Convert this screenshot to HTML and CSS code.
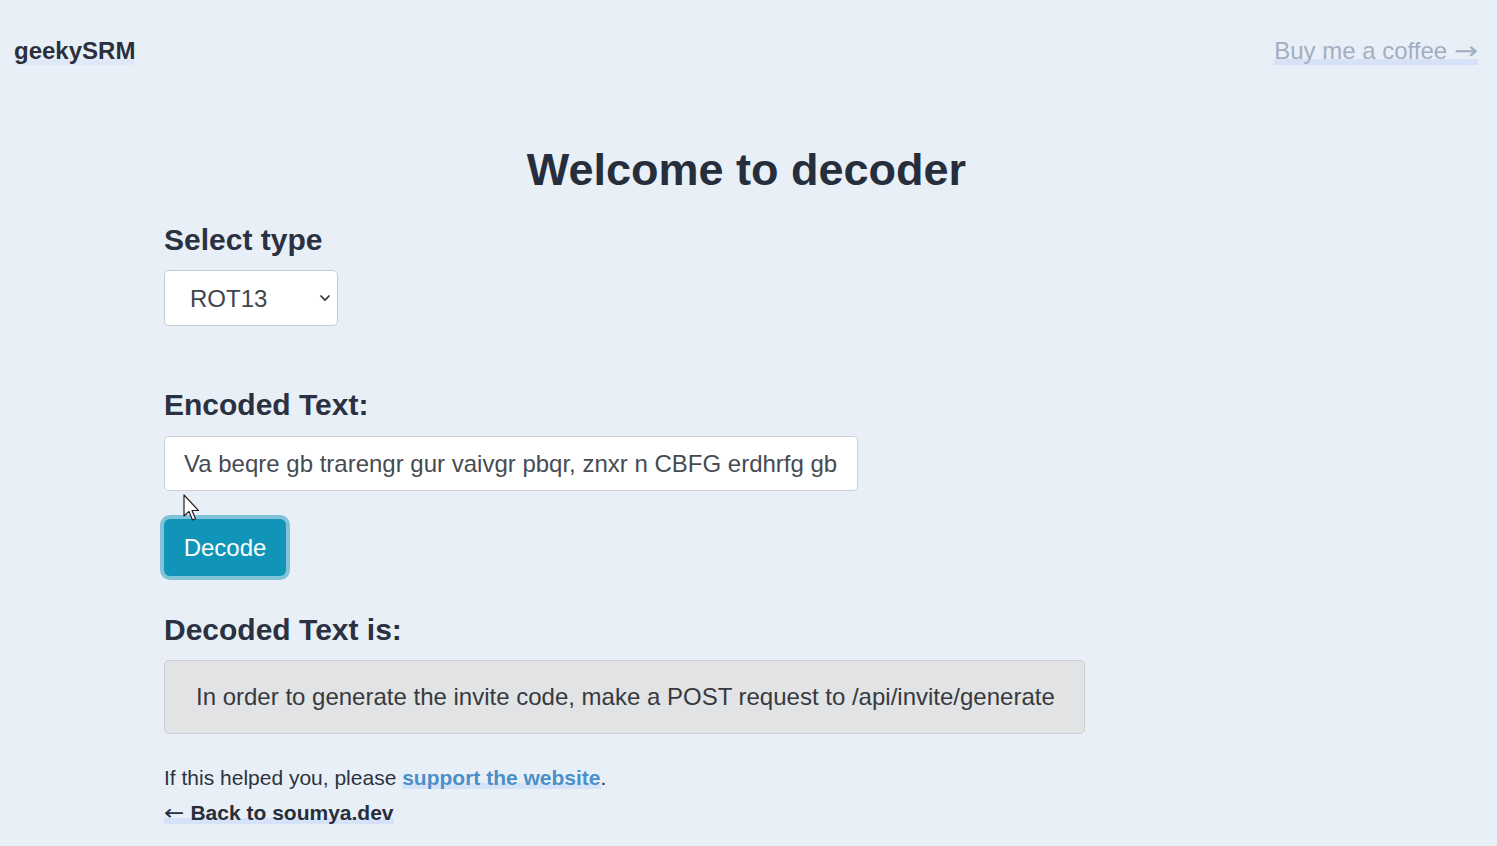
FILE: index.html
```html
<!DOCTYPE html>
<html lang="en">
<head>
<meta charset="utf-8">
<title>Decoder</title>
<link rel="stylesheet" href="styles.css">
</head>
<body>
<header class="topbar">
  <a class="brand hl" href="#">geekySRM</a>
  <a class="coffee hl" href="#">Buy me a coffee <span class="arrow arrow-r">→</span></a>
</header>
<main class="page">
  <h1 class="title">Welcome to decoder</h1>
  <label class="label label-first">Select type</label>
  <div class="select-wrap">
    <select class="select"><option>ROT13</option></select>
    <svg class="chev" width="12" height="8" viewBox="0 0 12 8"><path d="M1.5 1.5 L6 6 L10.5 1.5" fill="none" stroke="#333" stroke-width="1.7"/></svg>
  </div>
  <label class="label label-enc">Encoded Text:</label>
  <input class="input" type="text" value="Va beqre gb trarengr gur vaivgr pbqr, znxr n CBFG erdhrfg gb /ncv/vaivgr/trarengr">
  <div class="btn-row">
    <button class="btn">Decode</button>
    <svg class="cursor" width="20" height="30" viewBox="0 0 20 30"><path d="M1 1 L1 22 L6 17.5 L9.5 26 L12.5 24.7 L9 16.5 L15.5 16.5 Z" fill="#fff" stroke="#222" stroke-width="1.2" stroke-linejoin="round"/></svg>
  </div>
  <label class="label label-dec">Decoded Text is:</label>
  <div class="result">In order to generate the invite code, make a POST request to /api/invite/generate</div>
  <p class="note">If this helped you, please <a class="support hl" href="#">support the website</a>.</p>
  <p class="back"><a class="hl back-link" href="#"><span class="arrow arrow-l">←</span> Back to soumya.dev</a></p>
</main>
</body>
</html>
```

FILE: styles.css
```css
* { box-sizing: border-box; }
html, body { margin: 0; padding: 0; }
body {
  background: #e8eff7;
  font-family: "Liberation Sans", Arial, sans-serif;
  color: #2d3340;
  width: 1497px;
  height: 846px;
  overflow: hidden;
}
a { text-decoration: none; color: inherit; }
.hl {
  background-image: linear-gradient(rgba(200, 217, 247, 0.6), rgba(200, 217, 247, 0.6));
  background-repeat: no-repeat;
  background-position: 0 100%;
  background-size: 100% 6px;
}
.arrow {
  display: inline-block;
  font-family: "DejaVu Sans", sans-serif;
  font-weight: normal;
}
.arrow-r {
  transform: scaleX(1.2);
  transform-origin: right center;
  margin-left: 4px;
}
.arrow-l {
  transform: scaleX(1.15);
  transform-origin: left center;
  margin-right: 3px;
}
.topbar {
  display: flex;
  justify-content: space-between;
  align-items: center;
  padding: 37px 19px 0 14px;
  font-size: 24px;
  line-height: 28px;
}
.brand { font-weight: bold; color: #2a303c; background-image: linear-gradient(rgba(210, 224, 248, 0.4), rgba(210, 224, 248, 0.4)); }
.coffee { color: #a3aec0; }
.page {
  padding: 0 164px;
}
.title {
  margin: 79px 4px 0 0;
  text-align: center;
  font-size: 45px;
  line-height: 52px;
  font-weight: bold;
  color: #262e3b;
}
.label {
  display: block;
  font-size: 30px;
  line-height: 34px;
  font-weight: bold;
  color: #2a3140;
}
.label-first { margin-top: 27px; }
.label-enc { margin-top: 62px; }
.label-dec { margin-top: 37px; }
.select-wrap {
  position: relative;
  width: 174px;
  height: 56px;
  margin-top: 13px;
}
.select {
  appearance: none;
  -webkit-appearance: none;
  width: 174px;
  height: 56px;
  border: 1.5px solid #c8ccd2;
  border-radius: 5px;
  background: #fff;
  font-family: "Liberation Sans", Arial, sans-serif;
  font-size: 24px;
  color: #40454c;
  padding: 0 0 0 25px;
}
.chev {
  position: absolute;
  right: 7px;
  top: 24px;
}
.input {
  display: block;
  margin-top: 14px;
  width: 694px;
  height: 55px;
  border: 1.5px solid #cdd1d6;
  border-radius: 5px;
  background: #fff;
  font-family: "Liberation Sans", Arial, sans-serif;
  font-size: 24px;
  color: #464b52;
  padding: 0 19px;
}
.btn-row {
  position: relative;
  margin-top: 28px;
  height: 57px;
}
.btn {
  width: 122px;
  height: 57px;
  border: 0;
  border-radius: 6px;
  background: #1095b8;
  color: #fff;
  font-family: "Liberation Sans", Arial, sans-serif;
  font-size: 24px;
  box-shadow: 0 0 0 4px #80c3d8;
  padding: 0;
}
.cursor {
  position: absolute;
  left: 19px;
  top: -25px;
}
.result {
  display: inline-block;
  margin-top: 13px;
  height: 74px;
  padding: 0 29px 0 31px;
  line-height: 72px;
  background: #e2e3e4;
  border: 1.5px solid #cbcfd4;
  border-radius: 5px;
  font-size: 24px;
  color: #363a40;
}
.note {
  margin: 32px 0 0 0;
  font-size: 21px;
  line-height: 24px;
  color: #2d3340;
}
.support {
  color: #4a8fc8;
  font-weight: bold;
}
.back {
  margin: 11px 0 0 0;
  font-size: 21px;
  line-height: 24px;
}
.back-link { font-weight: bold; color: #262e3b; }
```
